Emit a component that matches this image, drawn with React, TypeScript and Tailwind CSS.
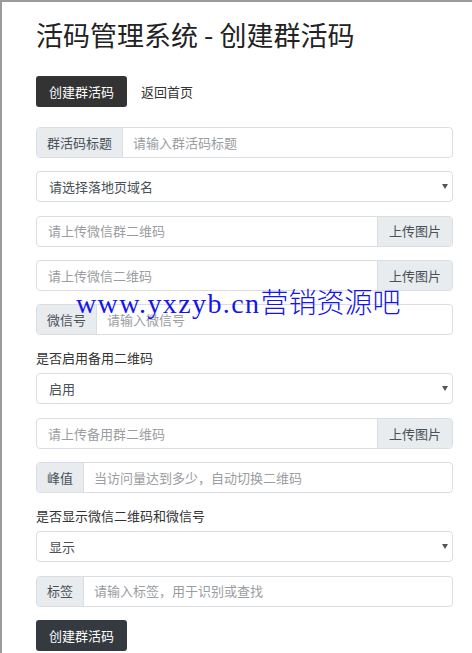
import { ReactNode } from "react";

const font = { fontFamily: '"Noto Sans CJK SC", "Noto Sans", sans-serif' };

const Addon = ({ children, side }: { children: ReactNode; side: "l" | "r" }) => (
  <div
    className={
      side === "l"
        ? "flex items-center bg-[#e9ecef] px-[10px] text-[#495057] border-r border-[#dadee2] shrink-0"
        : "flex items-center bg-[#e9ecef] px-[11px] text-[#495057] border-l border-[#dadee2] shrink-0"
    }
  >
    {children}
  </div>
);

const Row = ({ children, className }: { children: ReactNode; className?: string }) => (
  <div
    className={
      "flex h-[31px] w-full overflow-hidden rounded-[4px] border border-[#dadee2] bg-white text-[13px] " +
      (className || "mb-[13.3px]")
    }
  >
    {children}
  </div>
);

const Placeholder = ({ text, pad }: { text: string; pad?: string }) => (
  <div className={"flex flex-1 items-center text-[#9a9da1] " + (pad || "pl-[11px]")}>{text}</div>
);

const Select = ({ text }: { text: string }) => (
  <Row>
    <div className="flex flex-1 items-center justify-between pl-[12px] pr-[4px] text-[#495057]">
      <span>{text}</span>
      <svg width="6" height="5" viewBox="0 0 6 5">
        <path d="M0 0 L6 0 L3 5 Z" fill="#555" />
      </svg>
    </div>
  </Row>
);

const Upload = ({ text }: { text: string }) => (
  <Row>
    <Placeholder text={text} />
    <Addon side="r">上传图片</Addon>
  </Row>
);

export default function App() {
  return (
    <div
      className="relative min-h-[653px] border-l-2 border-t-2 border-[#9b9b9b] bg-white pl-[34px] pr-[19px] pt-[17px]"
      style={font}
    >
      <h3 className="mb-[26px] text-[27px] leading-[31px] text-[#222]">活码管理系统 - 创建群活码</h3>

      <div className="mb-[20px] flex items-center text-[13px]">
        <button className="h-[31px] rounded-[3px] bg-[#333333] pl-[13px] pr-[13px] text-white">
          创建群活码
        </button>
        <span className="ml-[14px] text-[#333]">返回首页</span>
      </div>

      <Row>
        <Addon side="l">群活码标题</Addon>
        <Placeholder text="请输入群活码标题" pad="pl-[10px]" />
      </Row>
      <Select text="请选择落地页域名" />
      <Upload text="请上传微信群二维码" />
      <Upload text="请上传微信二维码" />
      <Row>
        <Addon side="l">微信号</Addon>
        <Placeholder text="请输入微信号" pad="pl-[10px]" />
      </Row>

      <p className="mb-[5px] mt-[1px] text-[13px] leading-[20px] text-[#333]">是否启用备用二维码</p>
      <Select text="启用" />
      <Upload text="请上传备用群二维码" />
      <Row>
        <Addon side="l">峰值</Addon>
        <Placeholder text="当访问量达到多少，自动切换二维码" pad="pl-[10px]" />
      </Row>

      <p className="mb-[5px] mt-[1px] text-[13px] leading-[20px] text-[#333]">是否显示微信二维码和微信号</p>
      <Select text="显示" />
      <Row>
        <Addon side="l">标签</Addon>
        <Placeholder text="请输入标签，用于识别或查找" pad="pl-[10px]" />
      </Row>

      <button className="h-[31px] rounded-[3px] bg-[#343a40] px-[13px] text-[13px] text-white">
        创建群活码
      </button>

      {/* watermark over the form */}
      <div className="pointer-events-none absolute left-[74px] top-[278px] flex items-baseline whitespace-nowrap text-[#1414ee]">
        <span className="text-[28px] tracking-[1.4px]" style={{ fontFamily: '"Liberation Serif", serif' }}>
          www.yxzyb.cn
        </span>
        <span className="text-[28px] font-light" style={font}>
          营销资源吧
        </span>
      </div>
    </div>
  );
}
